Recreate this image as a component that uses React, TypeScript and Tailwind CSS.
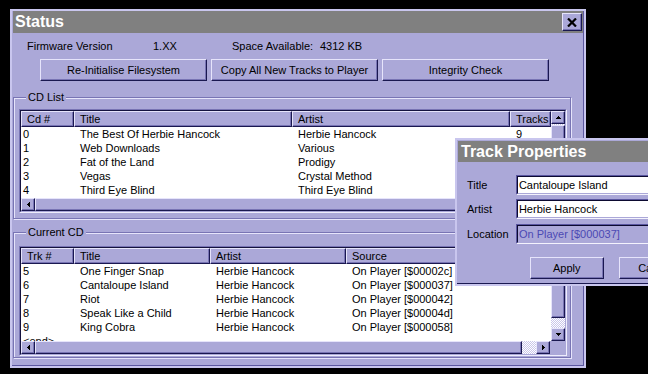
import React from "react";

// raised 3d edge used by buttons, header cells, scrollbar parts
const raised =
  "bg-[#aba8d8] border border-t-[#e6e4fb] border-l-[#e6e4fb] border-r-[#1a1850] border-b-[#1a1850] shadow-[inset_-1px_-1px_0_#7874b4]";
const checker =
  "bg-[repeating-conic-gradient(#ffffff_0_25%,#c9c6ea_0_50%)] bg-[length:2px_2px]";

type Col = { label: string; w: string };

function Arrow({ dir }: { dir: "up" | "down" | "left" | "right" }) {
  const rects =
    dir === "up"
      ? [[2, 0, 1, 1], [1, 1, 3, 1], [0, 2, 5, 1]]
      : dir === "down"
      ? [[0, 0, 5, 1], [1, 1, 3, 1], [2, 2, 1, 1]]
      : dir === "left"
      ? [[0, 2, 1, 1], [1, 1, 1, 3], [2, 0, 1, 5]]
      : [[0, 0, 1, 5], [1, 1, 1, 3], [2, 2, 1, 1]];
  const vert = dir === "up" || dir === "down";
  return (
    <svg width={vert ? 5 : 3} height={vert ? 3 : 5} shapeRendering="crispEdges">
      {rects.map(([x, y, w, h], i) => (
        <rect key={i} x={x} y={y} width={w} height={h} fill="#000" />
      ))}
    </svg>
  );
}

function ArrowBox({ dir, className }: { dir: "up" | "down" | "left" | "right"; className: string }) {
  return (
    <div className={`${raised} ${className} shrink-0 flex items-center justify-center`}>
      <Arrow dir={dir} />
    </div>
  );
}

function ListView({
  cols,
  rows,
  height,
  thumb,
}: {
  cols: Col[];
  rows: string[][];
  height: string;
  thumb: string;
}) {
  return (
    <div
      className={`w-[548px] ${height} border border-t-[#7874b4] border-l-[#7874b4] border-r-[#eeedfc] border-b-[#eeedfc]`}
    >
      <div className="h-full flex flex-col border border-t-[#14123e] border-l-[#14123e] border-r-[#aba8d8] border-b-[#aba8d8]">
        <div className="flex flex-1 min-h-0">
          <div className="flex-1 min-w-0 flex flex-col bg-white overflow-hidden">
            <div className="flex h-[16px] shrink-0">
              {cols.map((c) => (
                <div
                  key={c.label}
                  className={`${c.w} ${raised} h-full pl-[5px] flex items-center overflow-hidden whitespace-nowrap`}
                >
                  {c.label}
                </div>
              ))}
            </div>
            {rows.map((r, i) => (
              <div key={i} className="flex h-[14px] shrink-0 items-center">
                {r.map((cell, j) => (
                  <div
                    key={j}
                    className={`${cols[j].w} ${j === 0 ? "pl-[2px]" : "pl-[6px]"} overflow-hidden whitespace-nowrap`}
                  >
                    {cell}
                  </div>
                ))}
              </div>
            ))}
          </div>
          <div className={`w-[14px] shrink-0 flex flex-col ${checker}`}>
            <ArrowBox dir="up" className="h-[13px]" />
            <div className={`${raised} ${thumb} shrink-0`} />
            <div className="flex-1" />
            <ArrowBox dir="down" className="h-[13px]" />
          </div>
        </div>
        <div className="flex h-[13px] shrink-0">
          <ArrowBox dir="left" className="w-[14px]" />
          <div className={`${raised} w-[487px] shrink-0`} />
          <div className={`w-[14px] shrink-0 ${checker}`} />
          <ArrowBox dir="right" className="w-[14px]" />
          <div className="flex-1 bg-[#aba8d8]" />
        </div>
      </div>
    </div>
  );
}

function Group({ label, children, className }: { label: string; children: React.ReactNode; className: string }) {
  return (
    <fieldset
      className={`w-[558px] border border-[#7874b4] shadow-[inset_1px_1px_0_#e6e4fb,1px_1px_0_#e6e4fb] pl-[5px] ${className}`}
    >
      <legend className="ml-[7px] px-[2px] leading-[13px] bg-[#aba8d8]">{label}</legend>
      {children}
    </fieldset>
  );
}

const cdCols: Col[] = [
  { label: "Cd #", w: "w-[53px]" },
  { label: "Title", w: "w-[218px]" },
  { label: "Artist", w: "w-[218px]" },
  { label: "Tracks", w: "flex-1" },
];

// track counts of the lower rows sit under the dialog, so they are left blank
const cdRows = [
  ["0", "The Best Of Herbie Hancock", "Herbie Hancock", "9"],
  ["1", "Web Downloads", "Various", ""],
  ["2", "Fat of the Land", "Prodigy", ""],
  ["3", "Vegas", "Crystal Method", ""],
  ["4", "Third Eye Blind", "Third Eye Blind", ""],
];

const trkCols: Col[] = [
  { label: "Trk #", w: "w-[53px]" },
  { label: "Title", w: "w-[136px]" },
  { label: "Artist", w: "w-[136px]" },
  { label: "Source", w: "flex-1" },
];

const trkRows = [
  ["5", "One Finger Snap", "Herbie Hancock", "On Player [$00002c]"],
  ["6", "Cantaloupe Island", "Herbie Hancock", "On Player [$000037]"],
  ["7", "Riot", "Herbie Hancock", "On Player [$000042]"],
  ["8", "Speak Like a Child", "Herbie Hancock", "On Player [$00004d]"],
  ["9", "King Cobra", "Herbie Hancock", "On Player [$000058]"],
  ["<end>", "", "", ""],
];

function Field({ label, value, disabled, gap }: { label: string; value: string; disabled?: boolean; gap: string }) {
  return (
    <div className={`flex items-center h-[20px] ${gap}`}>
      <div className="w-[50px]">{label}</div>
      <div className="w-[180px] h-[20px] border border-t-[#5a56a0] border-l-[#5a56a0] border-r-[#f4f3fd] border-b-[#f4f3fd]">
        <div
          className={`h-full border border-t-[#0c0a30] border-l-[#0c0a30] border-r-[#aba8d8] border-b-[#aba8d8] pl-[1px] flex items-center whitespace-nowrap ${
            disabled ? "bg-[#aba8d8] text-[#4c48b4]" : "bg-white"
          }`}
        >
          {value}
        </div>
      </div>
    </div>
  );
}

export default function App() {
  return (
    <div className="relative w-[648px] h-[374px] overflow-hidden bg-black font-['Liberation_Sans',Arial,sans-serif] text-[11px] text-black">
      {/* Status window */}
      <div className="absolute left-[10px] top-[9px] w-[576px] h-[359px] bg-[#aba8d8] border-2 border-[#c9c6ee] shadow-[inset_-1px_-1px_0_#5c58a0] px-[1px] flex flex-col">
        <div className="h-[22px] shrink-0 bg-[#808080] flex items-center justify-between pl-[2px] pr-[1px]">
          <span className="text-white font-bold text-[16px] leading-none">Status</span>
          <div className={`${raised} w-[20px] h-[18px] flex items-center justify-center`}>
            <svg width="10" height="9" viewBox="0 0 10 9">
              <path d="M1 0.5 L9 8.5 M9 0.5 L1 8.5" stroke="#000" strokeWidth="2.2" />
            </svg>
          </div>
        </div>

        <div className="h-[26px] shrink-0 flex items-center pl-[14px]">
          <span className="w-[126px]">Firmware Version</span>
          <span className="w-[79px]">1.XX</span>
          <span className="w-[88px]">Space Available:</span>
          <span>4312 KB</span>
        </div>

        <div className="h-[22px] shrink-0 flex gap-[4px] pl-[27px]">
          <button className={`${raised} w-[167px] h-full`}>Re-Initialise Filesystem</button>
          <button className={`${raised} w-[167px] h-full`}>Copy All New Tracks to Player</button>
          <button className={`${raised} w-[167px] h-full`}>Integrity Check</button>
        </div>

        <Group label="CD List" className="mt-[10px] pt-[5px] pb-[5px]">
          <ListView cols={cdCols} rows={cdRows} height="h-[104px]" thumb="h-[30px] mt-[1px]" />
        </Group>

        <Group label="Current CD" className="mt-[7px] pt-[7px] pb-[1px]">
          <ListView cols={trkCols} rows={trkRows} height="h-[110px]" thumb="h-[57px]" />
        </Group>
      </div>

      {/* Track Properties dialog */}
      <div className="absolute left-[455px] top-[138px] w-[240px] h-[148px] bg-[#aba8d8] border-2 border-[#c9c6ee] shadow-[inset_0_-1px_0_#1a1850] p-[1px] flex flex-col">
        <div className="h-[21px] shrink-0 bg-[#808080] flex items-center pl-[3px]">
          <span className="text-white font-bold text-[16px] leading-none">Track Properties</span>
        </div>
        <div className="mt-[13px] pl-[9px] flex flex-col">
          <Field label="Title" value="Cantaloupe Island" gap="mb-[4px]" />
          <Field label="Artist" value="Herbie Hancock" gap="mb-[5px]" />
          <Field label="Location" value="On Player [$000037]" disabled gap="" />
        </div>
        <div className="mt-[13px] pl-[72px] flex gap-[15px]">
          <button className={`${raised} w-[75px] h-[22px]`}>Apply</button>
          <button className={`${raised} w-[75px] h-[22px]`}>Cancel</button>
        </div>
      </div>
    </div>
  );
}
